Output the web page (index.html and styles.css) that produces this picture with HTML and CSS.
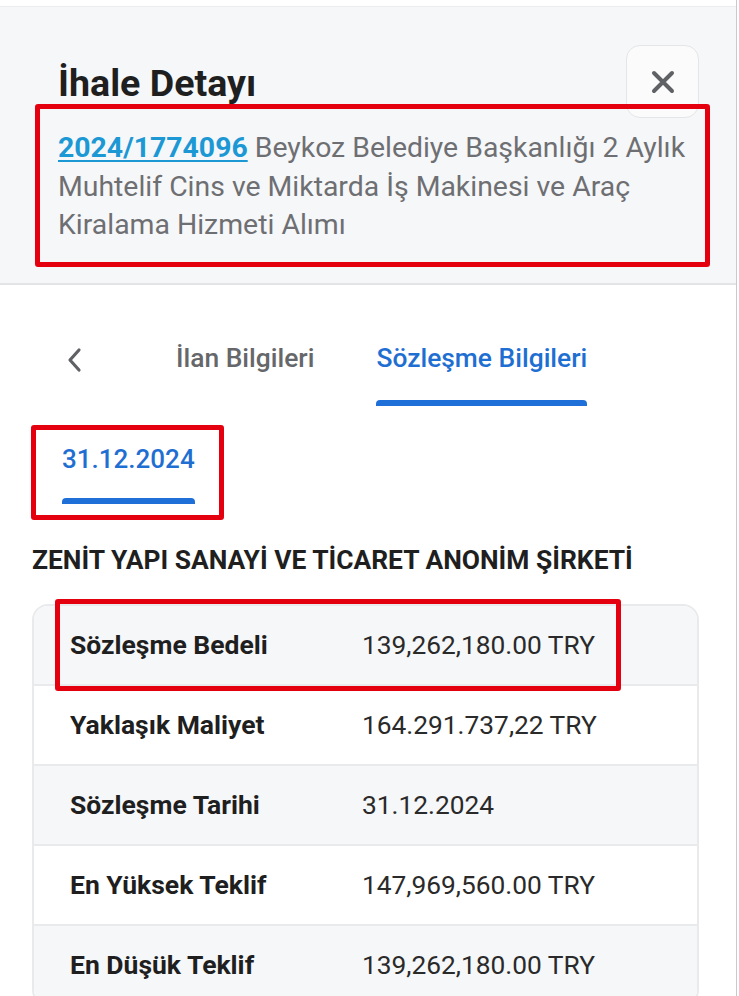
FILE: index.html
```html
<!DOCTYPE html>
<html lang="tr">
<head>
<meta charset="utf-8">
<title>İhale Detayı</title>
<link rel="stylesheet" href="styles.css">
</head>
<body>
<div class="screen">
  <header class="header">
    <div class="title-row">
      <h1 class="title">İhale Detayı</h1>
      <button class="close" aria-label="Kapat">
        <svg width="24" height="24" viewBox="0 0 24 24"><path d="M3 3 L21 21 M21 3 L3 21" stroke="#5f6164" stroke-width="4" stroke-linecap="round"/></svg>
      </button>
    </div>
    <div class="desc-box">
      <p class="desc"><a class="ikn" href="#">2024/1774096</a> Beykoz Belediye Başkanlığı 2 Aylık Muhtelif Cins ve Miktarda İş Makinesi ve Araç Kiralama Hizmeti Alımı</p>
    </div>
  </header>

  <nav class="tabs">
    <span class="chev">
      <svg width="18" height="26" viewBox="0 0 18 26"><path d="M13 3 L4 13 L13 23" fill="none" stroke="#5f6164" stroke-width="3.2" stroke-linecap="round" stroke-linejoin="round"/></svg>
    </span>
    <span class="tab">İlan Bilgileri</span>
    <span class="tab active">Sözleşme Bilgileri</span>
  </nav>

  <div class="date-box">
    <span class="date-tab">31.12.2024</span>
  </div>

  <h2 class="company">ZENİT YAPI SANAYİ VE TİCARET ANONİM ŞİRKETİ</h2>

  <div class="table-wrap">
    <div class="table">
      <div class="row"><span class="label">Sözleşme Bedeli</span><span class="value">139,262,180.00 TRY</span></div>
      <div class="row"><span class="label">Yaklaşık Maliyet</span><span class="value">164.291.737,22 TRY</span></div>
      <div class="row"><span class="label">Sözleşme Tarihi</span><span class="value">31.12.2024</span></div>
      <div class="row"><span class="label">En Yüksek Teklif</span><span class="value">147,969,560.00 TRY</span></div>
      <div class="row"><span class="label">En Düşük Teklif</span><span class="value">139,262,180.00 TRY</span></div>
    </div>
    <div class="mark-row"></div>
  </div>
</div>
</body>
</html>
```

FILE: styles.css
```css
* { box-sizing: border-box; }
html, body { margin: 0; padding: 0; background: #fff; }
body {
  font-family: Roboto, "Noto Sans", "Liberation Sans", sans-serif;
  color: #222;
  overflow: hidden;
}
.screen {
  width: 737px;
  height: 996px;
  border-right: 1px solid #c9c9c9;
  overflow: hidden;
  padding-top: 6px;
}
.header {
  background: #f6f7f9;
  border-top: 1px solid #ececec;
  border-bottom: 2px solid #e3e4e6;
  padding: 38px 26px 16px 35px;
}
.title-row {
  display: flex;
  justify-content: space-between;
  align-items: flex-start;
  padding-right: 11px;
}
.title {
  margin: 16px 0 0 23px;
  font-size: 37.6px;
  line-height: 44px;
  font-weight: 700;
  color: #1f1f1f;
}
.close {
  width: 73px;
  height: 73px;
  border: 1px solid #e4e5e7;
  border-radius: 14px;
  background: #fbfbfc;
  display: flex;
  align-items: center;
  justify-content: center;
  padding: 0;
}
.desc-box {
  position: relative;
  z-index: 1;
  margin-top: -14px;
  border: 5px solid #e5000f;
  border-radius: 3px;
  padding: 20px 10px 17px 18px;
}
.desc {
  margin: 0;
  font-size: 28.4px;
  line-height: 38.5px;
  color: #6e6f72;
}
.ikn {
  color: #1c98d4;
  font-weight: 700;
  text-decoration: underline;
  text-decoration-thickness: 2px;
  text-underline-offset: 3px;
}
.tabs {
  display: flex;
  align-items: stretch;
  height: 121px;
  padding: 0 0 0 66px;
}
.chev {
  display: flex;
  align-items: center;
  width: 110px;
  padding-top: 29px;
}
.tab {
  font-size: 26.4px;
  font-weight: 500;
  color: #66676a;
  display: flex;
  align-items: center;
  padding-top: 25px;
  margin-right: 62px;
  position: relative;
}
.tab.active { color: #1f6fd2; }
.tab.active::after {
  content: "";
  position: absolute;
  left: 0;
  right: 0;
  bottom: 0;
  height: 6px;
  background: #1f6fd8;
  border-radius: 4px 4px 0 0;
}
.date-box {
  margin: 19px 0 0 31px;
  width: 193px;
  height: 95px;
  border: 5px solid #e5000f;
  border-radius: 3px;
  padding: 0 0 0 26px;
  display: flex;
}
.date-tab {
  display: flex;
  align-items: center;
  height: 74px;
  font-size: 26px;
  font-weight: 500;
  color: #1f6fd2;
  position: relative;
  padding-bottom: 16px;
}
.date-tab::after {
  content: "";
  position: absolute;
  left: 0;
  right: 0;
  bottom: 0;
  height: 6px;
  background: #1f6fd8;
  border-radius: 4px 4px 0 0;
}
.company {
  margin: 24px 0 0 32px;
  font-size: 26.4px;
  line-height: 32px;
  font-weight: 700;
  color: #1f1f1f;
}
.table-wrap {
  position: relative;
  margin: 28px 0 0 32px;
  width: 667px;
}
.table {
  border: 2px solid #e9eaec;
  border-radius: 16px;
  overflow: hidden;
}
.row {
  display: flex;
  align-items: center;
  height: 80px;
  padding-left: 36px;
  border-top: 2px solid #e9eaec;
  background: #fff;
}
.row:first-child { border-top: none; height: 78px; }
.row:nth-child(odd) { background: #f6f7f9; }
.label {
  width: 292px;
  font-size: 26.5px;
  font-weight: 700;
  color: #1f1f1f;
}
.value {
  font-size: 26.3px;
  color: #2a2a2a;
}
.mark-row {
  position: absolute;
  left: 23px;
  top: -5px;
  width: 566px;
  height: 92px;
  border: 5px solid #e5000f;
  border-radius: 3px;
}
```
